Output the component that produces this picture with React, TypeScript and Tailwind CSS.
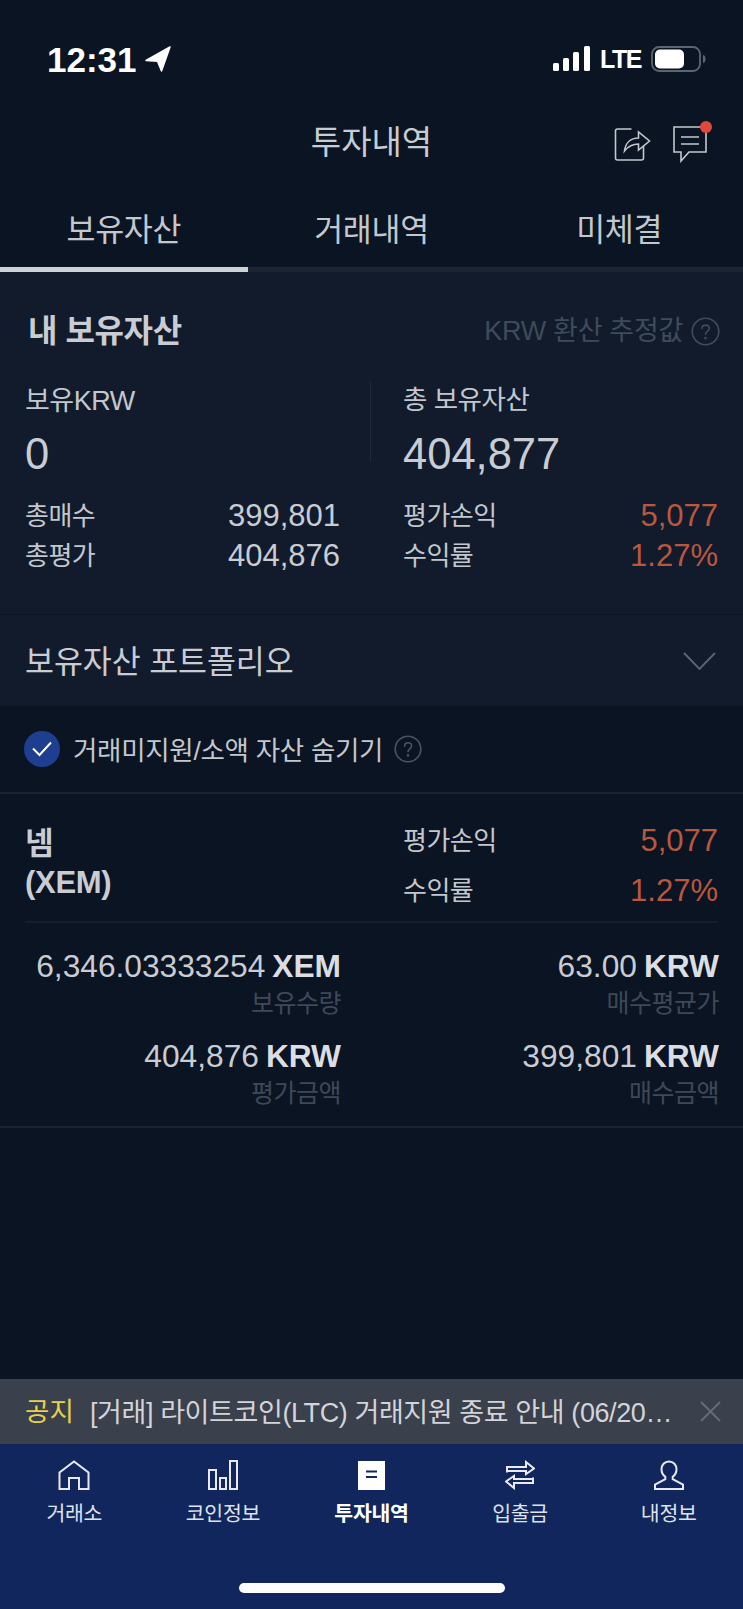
import React from 'react';

const Question = ({ size, color }: { size: number; color: string }) => (
  <svg width={size} height={size} viewBox="0 0 28 28" fill="none" stroke={color} strokeWidth="1.6" strokeLinecap="round">
    <circle cx="14" cy="14" r="12.8" />
    <path d="M10.6 11.2c0-2 1.5-3.4 3.5-3.4s3.5 1.3 3.5 3.2c0 2.8-3.6 2.9-3.6 5.8" />
    <circle cx="14" cy="20.4" r="0.5" fill={color} />
  </svg>
);

const NAV = [
  {
    label: '거래소',
    icon: (
      <svg width="32" height="30" viewBox="0 0 32 30" fill="none" stroke="#e8eaf0" strokeWidth="2">
        <path d="M1.5 29V12.5L16 1.5l14.500 11V29H21V18H11v11Z" />
      </svg>
    ),
  },
  {
    label: '코인정보',
    icon: (
      <svg width="30" height="30" viewBox="0 0 30 30" fill="none" stroke="#e8eaf0" strokeWidth="2">
        <rect x="1" y="10" width="7" height="19" />
        <rect x="12" y="18" width="6" height="11" />
        <rect x="22" y="1" width="7" height="28" />
      </svg>
    ),
  },
  {
    label: '투자내역',
    active: true,
    icon: (
      <svg width="27" height="29" viewBox="0 0 27 29">
        <rect width="27" height="29" fill="#ffffff" />
        <path d="M8 10.500h11M8 16h11" stroke="#10265c" strokeWidth="2.200" />
      </svg>
    ),
  },
  {
    label: '입출금',
    icon: (
      <svg width="30" height="30" viewBox="0 0 30 30" fill="none" stroke="#e8eaf0" strokeWidth="2">
        <path d="M2 12.500V7h19V2l8 6.500-8 5.500v-3H2" />
        <path d="M28 17.500V23H9v5l-8-6.500L9 16v3h19" />
      </svg>
    ),
  },
  {
    label: '내정보',
    icon: (
      <svg width="32" height="30" viewBox="0 0 32 30" fill="none" stroke="#e8eaf0" strokeWidth="2">
        <path d="M16 1.500c-4.500 0-7.500 3.300-7.500 7.800 0 3.300 1.700 6 3.800 7.500v2.400L2 24.500V29h28v-4.500l-10.300-5.300v-2.400c2.100-1.500 3.800-4.200 3.800-7.500 0-4.500-3-7.800-7.500-7.800Z" />
      </svg>
    ),
  },
];

function Metric({ label, value, accent, wide }: { label: string; value: string; accent?: boolean; wide?: boolean }) {
  return (
    <div className={`flex items-center justify-between ${wide ? 'h-[50px]' : 'h-10'}`}>
      <span className="text-[26px] tracking-[-0.5px] text-[#c3c7ce]">{label}</span>
      <span className={`text-[31px] ${accent ? 'text-[#b9573f]' : 'text-[#c9ccd2]'}`}>{value}</span>
    </div>
  );
}

function Amount({ value, unit, label }: { value: string; unit: string; label: string }) {
  return (
    <div className="flex flex-col items-end -mr-[1px]">
      <div className="h-9 flex items-center gap-[7px] text-[31.700px] leading-none text-[#c9ccd2]">
        <span>{value}</span>
        <span className="font-bold text-[#dcdee2]">{unit}</span>
      </div>
      <div className="h-9 pt-[1px] flex items-center text-[25px] tracking-[-0.5px] text-[#3e4858]">{label}</div>
    </div>
  );
}

export default function App() {
  return (
    <div
      className="w-[743px] h-[1609px] flex flex-col bg-[#0a1422] overflow-hidden"
      style={{ fontFamily: '"Liberation Sans", "Noto Sans CJK KR", sans-serif' }}
    >
      {/* Status bar */}
      <div className="h-[118px] flex justify-between items-start pt-[41px] pl-[47px] pr-[37px] shrink-0">
        <div className="flex items-center gap-[7px] h-9">
          <span className="text-[35px] font-bold text-white leading-none">12:31</span>
          <svg width="28" height="28" viewBox="0 0 28 28" fill="#ffffff" stroke="#ffffff" strokeWidth="1.500" strokeLinejoin="round">
            <path d="M26 2 2 15.500l11.500 .8L17.500 26Z" />
          </svg>
        </div>
        <div className="flex items-center h-9">
          <svg width="38" height="26" viewBox="0 0 38 26" fill="#ffffff">
            <rect x="0" y="17" width="6" height="8" rx="1.500" />
            <rect x="10" y="12" width="6" height="13" rx="1.500" />
            <rect x="20" y="6" width="6" height="19" rx="1.500" />
            <rect x="31" y="0" width="6" height="25" rx="1.500" />
          </svg>
          <span className="ml-[9px] w-[43px] text-[25px] font-bold text-white tracking-[-1.5px] leading-none">LTE</span>
          <svg className="ml-[8px]" width="55" height="26" viewBox="0 0 55 26">
            <rect x="1" y="1" width="48" height="24" rx="7" fill="none" stroke="#5b6573" strokeWidth="1.800" />
            <rect x="4" y="3.500" width="29" height="19" rx="5" fill="#ffffff" />
            <path d="M52 9c2 .5 2.500 2 2.500 4s-.5 3.500-2.500 4Z" fill="#5b6573" />
          </svg>
        </div>
      </div>

      {/* Title */}
      <div className="h-[48px] grid grid-cols-[1fr_auto_1fr] items-center shrink-0">
        <div />
        <h1 className="text-[33px] text-[#c9ccd2] font-normal leading-none">투자내역</h1>
        <div className="flex justify-end items-center pr-[36px] gap-[22px]">
          <svg width="37" height="37" viewBox="0 0 36 37" fill="none" stroke="#c4c7cd" strokeWidth="1.600">
            <path d="M17 5H3a2 2 0 0 0-2 2v27a2 2 0 0 0 2 2h24a2 2 0 0 0 2-2V21" />
            <path d="M10 27c1-8 6-13 14-13V8l11 9-11 9v-6c-6 0-10 2-14 7Z" fill="#0a1422" />
          </svg>
          <div className="relative w-[34px] h-[38px] mt-[3px]">
            <svg width="34" height="38" viewBox="0 0 34 38" fill="none" stroke="#c4c7cd" strokeWidth="1.600">
              <path d="M1 2h32v25H16l-8 9v-9H1Z" />
              <path d="M8 12h18M8 19h18" />
            </svg>
            <span className="absolute -top-[4px] -right-[5px] w-3 h-3 rounded-full bg-[#e0483c]" />
          </div>
        </div>
      </div>

      {/* Tabs */}
      <div className="grid grid-cols-3 h-[106px] shrink-0 border-b-[5px] border-[#1c2534] relative">
        {['보유자산', '거래내역', '미체결'].map((tab, i) => (
          <div key={tab} className={`flex items-center justify-center pt-[29px] text-[31.500px] tracking-[-0.3px] text-[#c3c7ce] ${i === 0 ? 'relative' : ''}`}>
            {tab}
            {i === 0 && <span className="absolute left-0 right-0 -bottom-[5px] h-[5px] bg-[#ced1d6]" />}
          </div>
        ))}
      </div>

      {/* Summary */}
      <section className="h-[343px] bg-[#111b2c] border-b border-[#0a1422] shrink-0 pl-[25px] pr-[25px]">
        <div className="h-[114px] flex justify-between items-center pt-[4px] -mr-[2px]">
          <h2 className="pl-[3px] text-[32px] font-bold text-[#c9ccd2] tracking-[-0.4px]">내 보유자산</h2>
          <div className="flex items-center gap-[8px]">
            <span className="text-[27px] text-[#3f4a5a] tracking-[-0.3px]">KRW 환산 추정값</span>
            <Question size={29} color="#3f4a5a" />
          </div>
        </div>
        <div className="grid grid-cols-[346px_1fr] -mt-[1px]">
          <div className="pr-[30px] relative">
            <div className="h-[32px] flex items-center text-[27px] text-[#c3c7ce] tracking-[-0.5px]">보유KRW</div>
            <div className="h-[76px] flex items-center text-[43.500px] text-[#c9ccd2]">0</div>
            <span className="absolute right-0 top-[-3px] w-px h-[80px] bg-[#1e2939]" />
          </div>
          <div className="pl-[32px]">
            <div className="h-[32px] flex items-center text-[26.500px] text-[#c3c7ce] tracking-[-0.5px]">총 보유자산</div>
            <div className="h-[76px] flex items-center text-[43.500px] text-[#c9ccd2]">404,877</div>
          </div>
        </div>
        <div className="grid grid-cols-2 gap-x-[63px] pt-[3px]">
          <div>
            <Metric label="총매수" value="399,801" />
            <Metric label="총평가" value="404,876" />
          </div>
          <div>
            <Metric label="평가손익" value="5,077" accent />
            <Metric label="수익률" value="1.27%" accent />
          </div>
        </div>
      </section>

      {/* Portfolio */}
      <div className="h-[91px] bg-[#111b2c] flex items-center justify-between pl-[25px] pr-[27px] shrink-0">
        <span className="text-[31.500px] tracking-[-0.1px] text-[#c9ccd2] pt-[5px]">보유자산 포트폴리오</span>
        <svg width="33" height="18" viewBox="0 0 33 18" fill="none" stroke="#5b6573" strokeWidth="1.800">
          <path d="M1 1l15.500 16L32 1" />
        </svg>
      </div>

      {/* Hide small assets */}
      <div className="h-[88px] flex items-center pl-[24px] border-b-2 border-[#1a2332] shrink-0">
        <span className="w-9 h-9 rounded-full bg-[#1e3f8f] flex items-center justify-center">
          <svg width="20" height="16" viewBox="0 0 20 16" fill="none" stroke="#ffffff" strokeWidth="2">
            <path d="M1 7.500 7.500 14 19 1.500" />
          </svg>
        </span>
        <span className="ml-[13px] pt-[5px] text-[26.500px] tracking-[-0.3px] text-[#c3c7ce]">거래미지원/소액 자산 숨기기</span>
        <span className="ml-[11px] flex">
          <Question size={28} color="#4a5463" />
        </span>
      </div>

      {/* Holding */}
      <section className="shrink-0 h-[334px] border-b-2 border-[#1a2332]">
        <div className="mx-[25px] h-[129px] border-b-2 border-[#141d2c] grid grid-cols-[378px_1fr] pt-[22px]">
          <div className="text-[31px] font-bold text-[#c9ccd2] leading-[39px] tracking-[-0.3px] pt-[8px]">
            <div>넴</div>
            <div>(XEM)</div>
          </div>
          <div>
            <Metric label="평가손익" value="5,077" accent wide />
            <Metric label="수익률" value="1.27%" accent wide />
          </div>
        </div>
        <div className="mx-[25px] grid grid-cols-[315px_1fr] gap-y-[18px] pt-[26px]">
          <Amount value="6,346.03333254" unit="XEM" label="보유수량" />
          <Amount value="63.00" unit="KRW" label="매수평균가" />
          <Amount value="404,876" unit="KRW" label="평가금액" />
          <Amount value="399,801" unit="KRW" label="매수금액" />
        </div>
      </section>

      {/* Notice */}
      <div className="mt-auto h-[65px] bg-[#3a404c] flex items-center pl-[25px] pr-[22px] shrink-0">
        <span className="text-[26.500px] text-[#e6d24f] w-[65px] shrink-0 pt-[3px]">공지</span>
        <span className="text-[27px] tracking-[-0.4px] text-[#d2d4d9] whitespace-nowrap pt-[3px]">
          [거래] 라이트코인(LTC) 거래지원 종료 안내 (06/20…
        </span>
        <svg className="ml-auto shrink-0" width="21" height="21" viewBox="0 0 21 21" fill="none" stroke="#666d79" strokeWidth="1.800">
          <path d="M1 1l19 19M20 1 1 20" />
        </svg>
      </div>

      {/* Bottom nav */}
      <nav className="h-[165px] bg-[#10265c] shrink-0 flex flex-col">
        <div className="grid grid-cols-5 pt-[16px]">
          {NAV.map((item) => (
            <div key={item.label} className="flex flex-col items-center">
              <div className="h-[30px] flex items-center justify-center">{item.icon}</div>
              <span className={`mt-[9px] text-[20.500px] leading-[30px] tracking-[-0.3px] ${item.active ? 'font-bold text-white' : 'text-[#dfe2ea]'}`}>
                {item.label}
              </span>
            </div>
          ))}
        </div>
        <div className="mt-auto mb-[16px] mx-auto w-[266px] h-[10px] rounded-full bg-white" />
      </nav>
    </div>
  );
}
